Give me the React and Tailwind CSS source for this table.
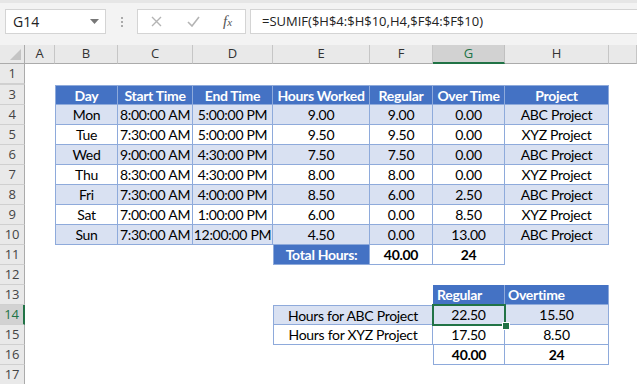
import React from 'react'

const COLS = ['A', 'B', 'C', 'D', 'E', 'F', 'G', 'H', '']
const BD = 'border-[#8eaadb]'

// cell style helpers
const head = `bg-[#4472c4] text-white font-bold border-r border-b ${BD}`
const band = `bg-[#d9e1f2] border-r border-b ${BD}`
const plain = `bg-white border-r border-b ${BD}`

const days = [
  ['Mon', '8:00:00 AM', '5:00:00 PM', '9.00', '9.00', '0.00', 'ABC Project'],
  ['Tue', '7:30:00 AM', '5:00:00 PM', '9.50', '9.50', '0.00', 'XYZ Project'],
  ['Wed', '9:00:00 AM', '4:30:00 PM', '7.50', '7.50', '0.00', 'ABC Project'],
  ['Thu', '8:30:00 AM', '4:30:00 PM', '8.00', '8.00', '0.00', 'XYZ Project'],
  ['Fri', '7:30:00 AM', '4:00:00 PM', '8.50', '6.00', '2.50', 'ABC Project'],
  ['Sat', '7:00:00 AM', '1:00:00 PM', '6.00', '0.00', '8.50', 'XYZ Project'],
  ['Sun', '7:30:00 AM', '12:00:00 PM', '4.50', '0.00', '13.00', 'ABC Project'],
]

function RowHead({ n, active }) {
  return (
    <div
      className={
        active
          ? "flex items-center justify-center bg-[#d2d2d2] text-[#217346] border-r-2 border-r-[#217346] border-b border-b-[#d0d0d0] text-[13px] font-['Open_Sans']"
          : "flex items-center justify-center bg-[#e9e9e9] text-[#444] border-r border-r-[#ababab] border-b border-b-[#d0d0d0] text-[13px] font-['Open_Sans']"
      }
    >
      {n}
    </div>
  )
}

function Cell({ children, className = '', span = 1 }) {
  return (
    <div className={`flex items-center justify-center whitespace-nowrap overflow-hidden ${span === 2 ? 'col-span-2' : ''} ${className}`}>
      {children}
    </div>
  )
}

function Blank({ n = 1 }) {
  return Array.from({ length: n }).map((_, i) => <div key={i} />)
}

export default function App() {
  return (
    <div className="w-[637px] h-[384px] overflow-hidden bg-white font-['Lato',sans-serif] text-[14px] tracking-[-0.3px] text-black">
      {/* formula bar */}
      <div className="h-[45px] bg-[#f3f3f3] border-t-[3px] border-[#e6e6e6] flex items-start pt-[6px] pl-[5px] tracking-normal">
        <div className="w-[101px] h-[25px] bg-white border border-[#d4d4d4] flex items-center justify-between pl-[7px] pr-[6px] font-['Open_Sans'] text-[14px] text-[#222]">
          <span>G14</span>
          <svg width="9" height="5" viewBox="0 0 9 5"><path d="M0 0h9L4.5 5z" fill="#777" /></svg>
        </div>
        <div className="w-[31px] h-[25px] flex flex-col items-center justify-center gap-[2px]">
          <span className="w-[2px] h-[2px] bg-[#aaa]" />
          <span className="w-[2px] h-[2px] bg-[#aaa]" />
          <span className="w-[2px] h-[2px] bg-[#aaa]" />
        </div>
        <div className="w-[109px] h-[25px] bg-white border border-[#d4d4d4] flex items-center pl-[13px]">
          <svg width="11" height="11" viewBox="0 0 11 11"><path d="M1 1l9 9M10 1l-9 9" stroke="#b4b4b4" strokeWidth="1.4" /></svg>
          <svg className="ml-[25px]" width="13" height="11" viewBox="0 0 13 11"><path d="M1 6l4 4 7-9" stroke="#b4b4b4" strokeWidth="1.6" fill="none" /></svg>
          <span className="ml-[23px] font-['Liberation_Serif',serif] italic text-[15px] text-[#555] leading-none">
            f<span className="text-[11px]">x</span>
          </span>
        </div>
        <div className="ml-[4px] flex-1 h-[25px] bg-white border border-r-0 border-[#d4d4d4] flex items-center pl-[11px] font-['Open_Sans'] text-[13px] text-[#222]">
          =SUMIF($H$4:$H$10,H4,$F$4:$F$10)
        </div>
      </div>

      {/* sheet */}
      <div className="grid grid-cols-[25px_30px_63px_75px_80px_97px_63px_72px_104px_28px] grid-rows-[19px_20px_1px_repeat(15,20px)]">
        {/* column headers */}
        <div className="relative bg-[#e9e9e9] border-r border-r-[#ababab] border-b border-b-[#ababab]">
          <svg className="absolute right-[3px] bottom-[3px]" width="11" height="11" viewBox="0 0 11 11"><path d="M11 0v11H0z" fill="#c4c4c4" /></svg>
        </div>
        {COLS.map((c) => (
          <div
            key={c || 'x'}
            className={
              c === 'G'
                ? "flex items-center justify-center bg-[#d2d2d2] text-[#217346] border-r border-r-[#c0c0c0] border-b-2 border-b-[#217346] text-[13px] tracking-normal font-['Open_Sans']"
                : "flex items-center justify-center bg-[#e9e9e9] text-[#333] border-r border-r-[#c6c6c6] border-b border-b-[#ababab] text-[13px] tracking-normal font-['Open_Sans']"
            }
          >
            {c}
          </div>
        ))}

        {/* row 1 */}
        <RowHead n={1} />
        <Blank n={9} />
        {/* hidden row 2 */}
        <div className="bg-[#e9e9e9] border-r border-r-[#ababab] border-b border-b-[#d0d0d0]" />
        <Blank n={9} />

        {/* row 3 header */}
        <RowHead n={3} />
        <Blank />
        {['Day', 'Start Time', 'End Time', 'Hours Worked', 'Regular', 'Over Time', 'Project'].map((h, i) => (
          <Cell key={h} className={`${head} border-t ${i === 0 ? 'border-l' : ''}`}>{h}</Cell>
        ))}
        <Blank />

        {days.map((d, r) => (
          <React.Fragment key={d[0]}>
            <RowHead n={r + 4} />
            <Blank />
            {d.map((v, i) => (
              <Cell key={i} className={`${r % 2 === 0 ? band : plain} ${i === 0 ? 'border-l' : ''}`}>{v}</Cell>
            ))}
            <Blank />
          </React.Fragment>
        ))}

        {/* row 11 totals */}
        <RowHead n={11} />
        <Blank n={4} />
        <Cell className={`${head} border-l`}>Total Hours:</Cell>
        <Cell className={`${plain} font-bold`}>40.00</Cell>
        <Cell className={`${plain} font-bold`}>24</Cell>
        <Blank n={2} />

        {/* row 12 */}
        <RowHead n={12} />
        <Blank n={9} />

        {/* row 13 */}
        <RowHead n={13} />
        <Blank n={6} />
        <Cell className={`${head} !justify-start pl-[4px]`}>Regular</Cell>
        <Cell className={`${head} !justify-start pl-[3px]`}>Overtime</Cell>
        <Blank />

        {/* row 14 */}
        <RowHead n={14} active />
        <Blank n={4} />
        <Cell span={2} className={`${band} border-l border-t`}>Hours for ABC Project</Cell>
        <div className="relative">
          <Cell className={`${band} w-full h-full`}>22.50</Cell>
          <div className="absolute left-[-1px] top-[-1px] right-[-1px] bottom-[-1px] border-2 border-[#217346]" />
          <div className="absolute right-[-4px] bottom-[-4px] w-[6px] h-[6px] bg-[#217346] outline outline-1 outline-white" />
        </div>
        <Cell className={band}>15.50</Cell>
        <Blank />

        {/* row 15 */}
        <RowHead n={15} />
        <Blank n={4} />
        <Cell span={2} className={`${plain} border-l`}>Hours for XYZ Project</Cell>
        <Cell className={plain}>17.50</Cell>
        <Cell className={plain}>8.50</Cell>
        <Blank />

        {/* row 16 */}
        <RowHead n={16} />
        <Blank n={6} />
        <Cell className={`${plain} border-l font-bold`}>40.00</Cell>
        <Cell className={`${plain} font-bold`}>24</Cell>
        <Blank />

        {/* row 17 */}
        <RowHead n={17} />
        <Blank n={9} />
      </div>
    </div>
  )
}
